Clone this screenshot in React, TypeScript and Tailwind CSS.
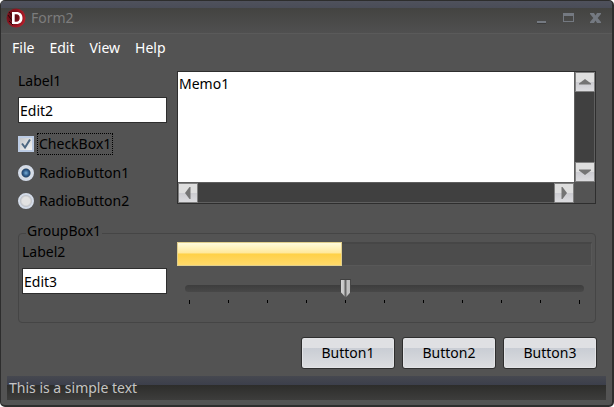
import { useState } from "react";

const field =
  "h-[26px] w-full border border-[#2e2e2e] bg-white px-[1px] text-black outline-none";

function TitleBar() {
  return (
    <header className="flex h-[33px] items-center bg-[linear-gradient(#4f515c_0px,#4a4d58_7px,#434341_7px,#505050_32px,#5a5a5a_32px)] pr-[10px] pl-[5px]">
      <svg width="20" height="20" viewBox="0 0 20 20" aria-hidden="true">
        <defs>
          <radialGradient id="badge" cx="0.35" cy="0.45" r="0.7">
            <stop offset="0" stopColor="#4c0a10" />
            <stop offset="0.6" stopColor="#8c1420" />
            <stop offset="1" stopColor="#c3202c" />
          </radialGradient>
        </defs>
        <circle cx="10" cy="10" r="9.5" fill="url(#badge)" />
        <path d="M2 7l5 7M3 4l5 6M3 13l4 4" stroke="#2a0508" strokeWidth="1" />
        <path
          fill="#fff"
          fillRule="evenodd"
          d="M6 4h4.500c3.800 0 6 2.200 6 6s-2.200 6-6 6H6zM8.700 6.300v7.400h1.600c2.200 0 3.400-1.300 3.400-3.700s-1.200-3.700-3.400-3.700z"
        />
      </svg>
      <h1 className="ml-[5px] flex-1 text-[#7c7c7c]">Form2</h1>
      <div className="flex gap-[14px] text-[#747981]">
        <button aria-label="Minimize">
          <svg width="13" height="12" viewBox="0 0 13 12">
            <path d="M2 9h9v3H2z" fill="#3b3b3b" />
            <path d="M2 9h9v2H2z" fill="currentColor" />
          </svg>
        </button>
        <button aria-label="Maximize">
          <svg width="13" height="12" viewBox="0 0 13 12">
            <path
              fill="currentColor"
              fillRule="evenodd"
              d="M1 1h11v9H1zM2 4v5h9V4z"
            />
          </svg>
        </button>
        <button aria-label="Close">
          <svg width="13" height="12" viewBox="0 0 13 12">
            <path
              fill="currentColor"
              d="M1 1h4l1.500 2.500L8 1h4v1L8.700 6l3.300 4v1H8L6.500 8.500 5 11H1v-1l3.300-4L1 2z"
            />
          </svg>
        </button>
      </div>
    </header>
  );
}

function Arrow({ label, d }: { label: string; d: string }) {
  return (
    <button
      aria-label={label}
      className="grid size-5 shrink-0 place-items-center border border-[#808080] bg-[linear-gradient(#dedede_50%,#cbcbd0_50%,#dcdcdf)]"
    >
      <svg width="14" height="14" viewBox="0 0 14 14">
        <path d={d} fill="#747474" />
      </svg>
    </button>
  );
}

function Memo() {
  return (
    <div className="grid h-[133px] min-w-0 flex-1 grid-cols-[minmax(0,1fr)_21px] grid-rows-[minmax(0,1fr)_21px] border border-[#2e2e2e]">
      <textarea
        aria-label="Memo"
        defaultValue="Memo1"
        className="resize-none overflow-hidden bg-white px-[1px] pt-[2px] text-black outline-none"
      />
      <div className="flex flex-col items-center justify-between border-x border-[#5f5f5f] bg-[#404040]">
        <Arrow label="Scroll up" d="M1 9.500v-1L7 4l6 4.500v1z" />
        <Arrow label="Scroll down" d="M1 4.500v1L7 10l6-4.500v-1z" />
      </div>
      <div className="flex items-center justify-between border-y border-[#5f5f5f] bg-[#404040]">
        <Arrow label="Scroll left" d="M9.500 1h-1L4 7l4.500 6h1z" />
        <Arrow label="Scroll right" d="M4.500 1h1L10 7l-4.500 6h-1z" />
      </div>
    </div>
  );
}

function Radio({
  label,
  checked,
  onChange,
}: {
  label: string;
  checked: boolean;
  onChange: () => void;
}) {
  return (
    <label className="flex h-7 items-center gap-[5px]">
      <input
        type="radio"
        name="choice"
        checked={checked}
        onChange={onChange}
        className="size-4 appearance-none rounded-full border-2 border-[#d3dbe8] bg-[radial-gradient(circle,#e2e2e2_45%,#b9bcc2_70%)] checked:bg-[radial-gradient(circle_at_50%_50%,#76add6_0px,#2b5685_3px,#25476d_4px,#d9dde2_5px)]"
      />
      {label}
    </label>
  );
}

function GroupBox() {
  const [position, setPosition] = useState(4);
  return (
    <fieldset className="mt-[9px] h-[99px] min-w-0 rounded border border-[#454545] px-[3px]">
      <legend className="ml-1 h-[18px] px-[1px] leading-[14px]">GroupBox1</legend>
      <div className="flex gap-[10px]">
        <div className="w-[145px] shrink-0">
          <label htmlFor="edit3" className="mb-[6px] block h-5">
            Label2
          </label>
          <input id="edit3" defaultValue="Edit3" className={field} />
        </div>
        <div className="min-w-0 flex-1">
          <div
            role="progressbar"
            aria-label="Progress"
            aria-valuenow={40}
            className="h-6 border border-t-2 border-[#585858] border-t-[#464646] bg-[#4c4c4c]"
          >
            <div className="-mt-[2px] -ml-px h-6 w-2/5 border border-[#e1cf8c] bg-[linear-gradient(#fffbdc,#ffe99c_45%,#ffd147_50%,#ffd96a)]" />
          </div>
          <div className="mt-3 px-2">
            <input
              type="range"
              aria-label="Position"
              min={0}
              max={10}
              value={position}
              onChange={(e) => setPosition(Number(e.target.value))}
              className="block h-5 w-full appearance-none bg-transparent [&::-webkit-slider-runnable-track]:h-[7px] [&::-webkit-slider-runnable-track]:rounded-full [&::-webkit-slider-runnable-track]:bg-[linear-gradient(#3d3d3d,#484848)] [&::-webkit-slider-thumb]:-mt-[6px] [&::-webkit-slider-thumb]:h-[19px] [&::-webkit-slider-thumb]:w-[11px] [&::-webkit-slider-thumb]:appearance-none [&::-webkit-slider-thumb]:bg-[linear-gradient(#404040_1px,transparent_1px),linear-gradient(90deg,#454545_1px,#d4d4d4_1px,#c2c2c2_4px,#666_5px,#666_6px,#c2c2c2_7px,#bcbcbc_10px,#454545_10px)] [&::-webkit-slider-thumb]:[clip-path:polygon(0_0,100%_0,100%_68%,50%_100%,0_68%)]"
            />
            <div className="mt-[2px] flex justify-between px-1">
              {Array.from({ length: 11 }, (_, i) => (
                <span
                  key={i}
                  className="h-[3px] w-px bg-black first:h-1 last:h-1"
                />
              ))}
            </div>
          </div>
        </div>
      </div>
    </fieldset>
  );
}

export default function App() {
  const [checked, setChecked] = useState(true);
  const [choice, setChoice] = useState(1);
  return (
    <div className="overflow-hidden rounded-[5px] border border-r-2 border-b-2 border-[#2d2d2d] bg-[#535353] font-['Noto_Sans',sans-serif] text-[14px] leading-5 text-black">
      <TitleBar />
      <nav className="flex h-7 items-center gap-[15px] px-[11px] text-white">
        <button>File</button>
        <button>Edit</button>
        <button>View</button>
        <button>Help</button>
      </nav>
      <main>
        <div className="pt-[9px] pr-4 pl-[17px]">
          <div className="flex gap-[10px]">
            <div className="w-[149px] shrink-0">
              <label htmlFor="edit2" className="mb-[6px] block h-5">
                Label1
              </label>
              <input id="edit2" defaultValue="Edit2" className={field} />
              <label className="mt-[10px] mb-1 flex h-[22px] items-center gap-[3px]">
                <span className="grid size-4 *:col-start-1 *:row-start-1">
                  <input
                    type="checkbox"
                    checked={checked}
                    onChange={(e) => setChecked(e.target.checked)}
                    className="size-4 appearance-none border-2 border-[#bccbe3] bg-[linear-gradient(135deg,#c4c7cb,#f4f4f4)]"
                  />
                  {checked && (
                    <svg
                      width="16"
                      height="16"
                      viewBox="0 0 16 16"
                      className="pointer-events-none"
                      aria-hidden="true"
                    >
                      <path
                        d="M4 7.500l3 4L12 3.500"
                        fill="none"
                        stroke="#4d6781"
                        strokeWidth="2"
                      />
                    </svg>
                  )}
                </span>
                <span className="border border-dotted border-black px-[1px]">
                  CheckBox1
                </span>
              </label>
              <Radio
                label="RadioButton1"
                checked={choice === 1}
                onChange={() => setChoice(1)}
              />
              <Radio
                label="RadioButton2"
                checked={choice === 2}
                onChange={() => setChoice(2)}
              />
            </div>
            <Memo />
          </div>
          <GroupBox />
        </div>
        <div className="mt-[14px] flex justify-end gap-[7px] pr-[15px]">
          {["Button1", "Button2", "Button3"].map((name) => (
            <button
              key={name}
              className="h-8 w-[94px] rounded-[3px] border border-[#2e2e2e] bg-[linear-gradient(#dfe0e3_33%,#c9cdd4_34%,#dcdde0)] shadow-[inset_0_0_0_1px_#e2e3e6]"
            >
              {name}
            </button>
          ))}
        </div>
      </main>
      <footer className="mx-[6px] mt-[7px] mb-[5px] flex h-6 items-center bg-[linear-gradient(#464850_0px,#3c3f4b_9px,#2d2d2b_9px,#3d3d3c_24px)] px-[2px] text-[#c4c4c4]">
        This is a simple text
      </footer>
    </div>
  );
}
